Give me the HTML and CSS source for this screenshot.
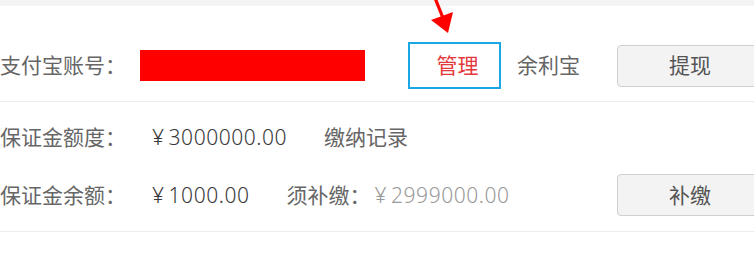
FILE: index.html
```html
<!DOCTYPE html>
<html lang="zh-CN">
<head>
<meta charset="utf-8">
<link rel="stylesheet" href="styles.css">
</head>
<body>
<div class="page">
  <div class="topband"></div>
  <div class="card">
    <div class="section first">
      <div class="row">
        <span class="label">支付宝账号：</span>
        <span class="redact"></span>
        <span class="manage">管理</span>
        <span class="link">余利宝</span>
        <span class="btn">提现</span>
      </div>
    </div>
    <div class="section second">
      <div class="row">
        <span class="label">保证金额度：</span>
        <span class="amount"><span class="cur">¥</span>3000000.00</span>
        <span class="link gap">缴纳记录</span>
      </div>
      <div class="row">
        <span class="label">保证金余额：</span>
        <span class="amount"><span class="cur">¥</span>1000.00</span>
        <span class="link gap">须补缴：</span>
        <span class="amount muted"><span class="cur">¥</span>2999000.00</span>
        <span class="btn">补缴</span>
      </div>
    </div>
  </div>
  <svg class="arrow" width="40" height="40" viewBox="0 0 40 40">
    <line x1="5" y1="-2" x2="13" y2="18" stroke="#ff0000" stroke-width="3.2"/>
    <polygon points="1,20 23,12 18,33" fill="#ff0000"/>
  </svg>
</div>
</body>
</html>
```
FILE: styles.css
```css
html, body {
  margin: 0;
  padding: 0;
  background: #ffffff;
  overflow: hidden;
}
body {
  width: 754px;
  height: 255px;
  font-family: "Noto Sans", "Noto Sans CJK SC", "Microsoft YaHei", sans-serif;
  font-size: 21px;
  color: #666;
}
.page {
  position: relative;
  width: 763px;
}
.topband {
  height: 6px;
  background: #f4f4f4;
}
.section {
  border-bottom: 1px solid #ececec;
}
.section.first {
  padding: 36px 0 12px;
}
.section.second {
  padding: 14px 0 15px;
  display: flex;
  flex-direction: column;
  gap: 16px;
}
.row {
  display: flex;
  align-items: center;
  height: 47px;
}
.row > span {
  line-height: 1;
}
.section.second .row {
  height: 42px;
}
.label {
  width: 140px;
  flex: none;
  color: #666;
}
.redact {
  width: 225px;
  height: 31px;
  background: #ff0000;
  flex: none;
}
.manage {
  margin-left: 43px;
  width: 83px;
  height: 43px;
  padding-left: 6px;
  border: 2px solid #1ba6e6;
  color: #e4393c;
  display: flex;
  align-items: center;
  justify-content: center;
  flex: none;
}
.link {
  color: #666;
  margin-left: 16px;
}
.link.gap {
  margin-left: 37px;
}
.amount {
  color: #3a3a3a;
  margin-left: 12px;
  font-weight: 300;
  letter-spacing: 0.55px;
}
.cur {
  margin-right: 4px;
}
.amount.muted {
  color: #9a9a9a;
  margin-left: 4px;
}
.btn {
  margin-left: auto;
  width: 144px;
  height: 40px;
  border: 1px solid #cfcfcf;
  border-radius: 4px;
  background: #f3f3f3;
  color: #555;
  display: flex;
  align-items: center;
  justify-content: center;
  flex: none;
}
.arrow {
  position: absolute;
  left: 430px;
  top: 0;
}
```
